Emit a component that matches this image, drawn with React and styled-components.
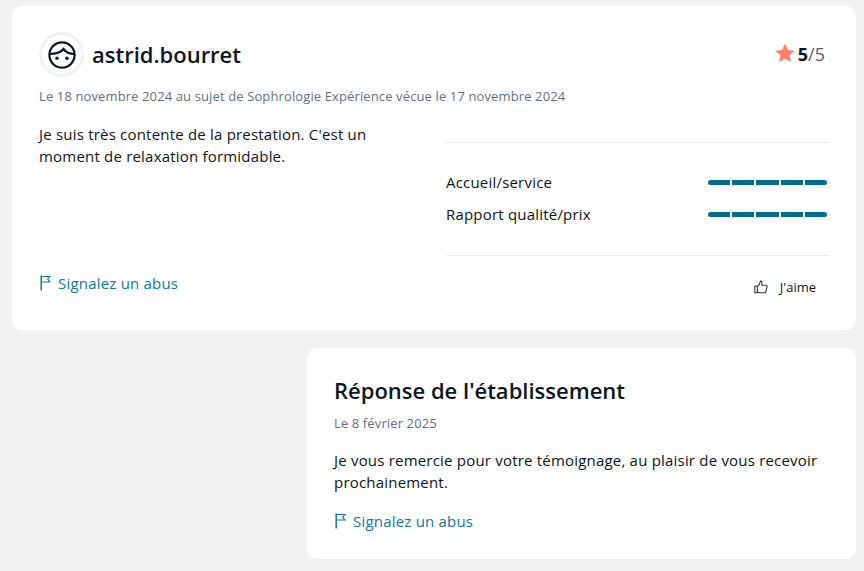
import React from 'react';
import styled, { createGlobalStyle } from 'styled-components';

const GlobalStyle = createGlobalStyle`
  html, body {
    margin: 0;
    padding: 0;
    height: 100%;
    background: #f1f2f4;
    font-family: "Open Sans", "Noto Sans", sans-serif;
    overflow: hidden;
  }
`;

const Page = styled.div`
  display: flex;
  flex-direction: column;
  padding: 6px 8px 0 12px;
  gap: 18px;
`;

const Card = styled.div`
  background: #fff;
  border-radius: 10px;
  box-sizing: border-box;
`;

const ReviewCard = styled(Card)`
  height: 324px;
  padding: 26px 27px 0 27px;
`;

const Header = styled.div`
  display: flex;
  justify-content: space-between;
  align-items: center;
  height: 45px;
`;

const User = styled.div`
  display: flex;
  align-items: center;
  gap: 8px;
`;

const Avatar = styled.div`
  width: 45px;
  height: 45px;
  border-radius: 50%;
  background: #f1f2f4;
  display: flex;
  align-items: center;
  justify-content: center;
`;

const AvatarInner = styled.div`
  width: 39px;
  height: 39px;
  border-radius: 50%;
  background: #fff;
  display: flex;
  align-items: center;
  justify-content: center;
`;

const UserName = styled.div`
  font-size: 22px;
  font-weight: 600;
  color: #0c1620;
  padding-bottom: 2px;
`;

const Score = styled.div`
  display: flex;
  align-items: center;
  gap: 3px;
  font-size: 18px;
  color: #5a6270;
  margin-right: 4px;
  padding-bottom: 2px;
`;

const ScoreValue = styled.b`
  font-weight: 700;
  color: #0c1620;
`;

const StarIcon = styled.svg`
  margin-bottom: 2px;
`;

const Meta = styled.div`
  font-size: 13px;
  letter-spacing: 0.12px;
  line-height: 18px;
  color: #667080;
  margin-top: ${({ $top }) => $top}px;
`;

const Columns = styled.div`
  display: flex;
  justify-content: space-between;
  margin-top: 18px;
`;

const LeftColumn = styled.div`
  width: 345px;
  height: 171px;
  display: flex;
  flex-direction: column;
  justify-content: space-between;
`;

const Body = styled.p`
  margin: 0;
  font-size: 15px;
  letter-spacing: 0.2px;
  line-height: 22px;
  color: #0c1620;
`;

const RightColumn = styled.div`
  width: 383px;
  margin-top: 19px;
`;

const Ratings = styled.div`
  border-top: 1px solid #e9ebee;
  border-bottom: 1px solid #e9ebee;
  height: 114px;
  box-sizing: border-box;
  padding-top: 28px;
  display: flex;
  flex-direction: column;
  gap: 10px;
`;

const RatingRow = styled.div`
  display: flex;
  justify-content: space-between;
  align-items: center;
  height: 22px;
  font-size: 15px;
  letter-spacing: 0.2px;
  color: #0c1620;
`;

const Bars = styled.div`
  display: flex;
  gap: 2px;
  width: 119px;
  margin-right: 2px;
`;

const BarSegment = styled.span`
  flex: 1;
  height: 5px;
  background: #006d90;
  &:first-child {
    border-radius: 3px 0 0 3px;
  }
  &:last-child {
    border-radius: 0 3px 3px 0;
  }
`;

const AbuseLink = styled.a`
  display: inline-flex;
  align-items: center;
  gap: 6px;
  font-size: 15px;
  letter-spacing: 0.2px;
  line-height: 22px;
  color: #0f7a9c;
`;

const LikeRow = styled.div`
  display: flex;
  justify-content: flex-end;
  margin-top: 22px;
`;

const LikeButton = styled.div`
  display: flex;
  align-items: center;
  gap: 12px;
  font-size: 13px;
  color: #0c1620;
  margin-right: 13px;
`;

const ReplyCard = styled(Card)`
  align-self: flex-end;
  width: 549px;
  height: 211px;
  padding: 26px 27px 0;
`;

const ReplyTitle = styled.h2`
  margin: 0;
  font-size: 22px;
  line-height: 32px;
  font-weight: 600;
  color: #0c1620;
`;

const ReplyBody = styled(Body)`
  margin: 17px 0 17px;
`;

const FlagIcon = () => (
  <svg width="13" height="16" viewBox="0 0 13 16" fill="none" stroke="#0f7a9c" strokeWidth="1.1">
    <path d="M2.2 0.5V15.5" strokeWidth="1.5" />
    <path d="M2.5 1.5H11L8.6 4.2L11 7H2.5" />
  </svg>
);

const FaceIcon = () => (
  <svg width="28" height="28" viewBox="0 0 28 28" fill="none" stroke="#0c1620" strokeWidth="2.2">
    <circle cx="14" cy="14" r="12.6" />
    <path d="M1.6 13C8 13 13 11.4 15.5 8C17.5 10.8 21 13 26.4 13" />
    <circle cx="9" cy="17.2" r="1.7" fill="#0c1620" stroke="none" />
    <circle cx="19" cy="17.2" r="1.7" fill="#0c1620" stroke="none" />
  </svg>
);

const ThumbIcon = () => (
  <svg width="14" height="14" viewBox="0 0 14 14" fill="none" stroke="#333b44" strokeWidth="1.1">
    <path d="M0.8 6.2H3.4V12.8H0.8Z" />
    <path d="M3.4 6.4C5 5.4 6 3.8 6.3 1.2C7.6 0.8 8.4 2.2 7.8 5.2H12C13 5.2 13.3 6 13 6.8L11.8 12C11.6 12.6 11.2 12.8 10.6 12.8H5.2L3.4 12" />
  </svg>
);

const Star = () => (
  <StarIcon width="20" height="20" viewBox="0 0 20 20" fill="#ff8066">
    <path d="M10 0.6L12.9 6.9L19.6 7.7L14.6 12.3L16 19.1L10 15.7L4 19.1L5.4 12.3L0.4 7.7L7.1 6.9Z" />
  </StarIcon>
);

const Abuse = () => (
  <AbuseLink>
    <FlagIcon />
    Signalez un abus
  </AbuseLink>
);

const RatingBars = () => (
  <Bars>
    {[0, 1, 2, 3, 4].map((i) => (
      <BarSegment key={i} />
    ))}
  </Bars>
);

const App = () => (
  <Page>
    <GlobalStyle />
    <ReviewCard>
      <Header>
        <User>
          <Avatar>
            <AvatarInner>
              <FaceIcon />
            </AvatarInner>
          </Avatar>
          <UserName>astrid.bourret</UserName>
        </User>
        <Score>
          <Star />
          <span>
            <ScoreValue>5</ScoreValue>/5
          </span>
        </Score>
      </Header>
      <Meta $top={10}>Le 18 novembre 2024 au sujet de Sophrologie Expérience vécue le 17 novembre 2024</Meta>
      <Columns>
        <LeftColumn>
          <Body>Je suis très contente de la prestation. C'est un moment de relaxation formidable.</Body>
          <Abuse />
        </LeftColumn>
        <RightColumn>
          <Ratings>
            <RatingRow>
              Accueil/service
              <RatingBars />
            </RatingRow>
            <RatingRow>
              Rapport qualité/prix
              <RatingBars />
            </RatingRow>
          </Ratings>
          <LikeRow>
            <LikeButton>
              <ThumbIcon />
              J'aime
            </LikeButton>
          </LikeRow>
        </RightColumn>
      </Columns>
    </ReviewCard>
    <ReplyCard>
      <ReplyTitle>Réponse de l'établissement</ReplyTitle>
      <Meta $top={8}>Le 8 février 2025</Meta>
      <ReplyBody>Je vous remercie pour votre témoignage, au plaisir de vous recevoir prochainement.</ReplyBody>
      <Abuse />
    </ReplyCard>
  </Page>
);

export default App;
